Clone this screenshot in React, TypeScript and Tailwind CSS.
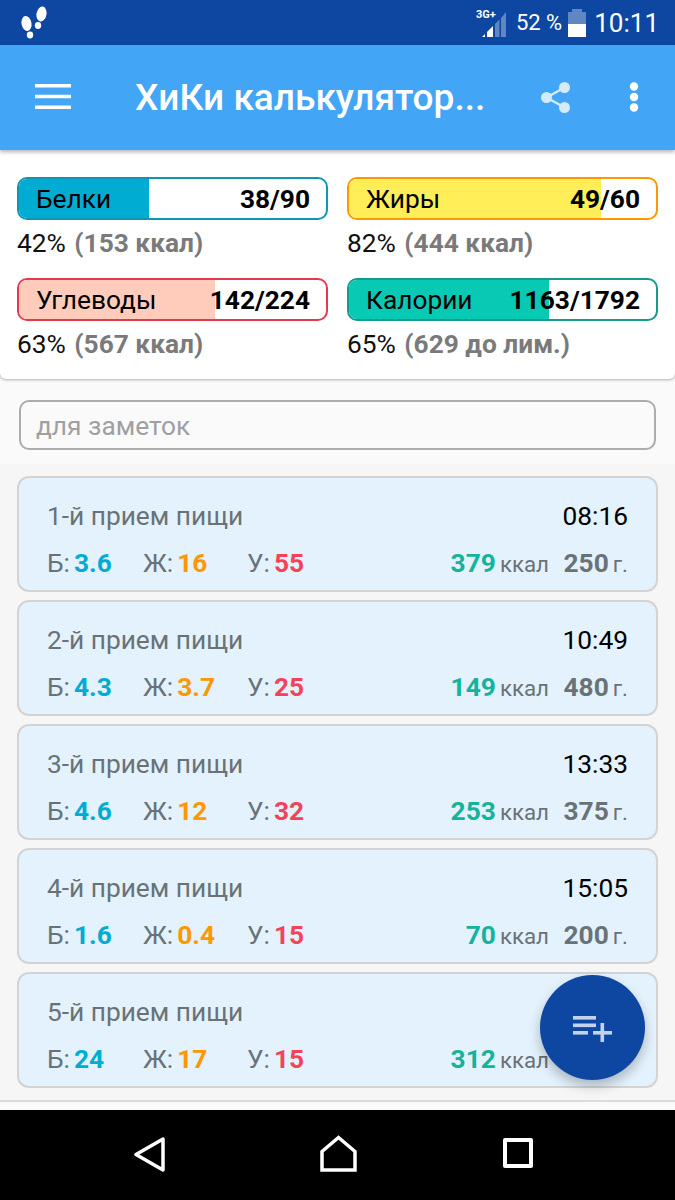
import React from "react";

type Bar = { name: string; value: string; pct: number; fill: string; border: string; p: string; note: string };
const bars: Bar[] = [
  { name: "Белки", value: "38/90", pct: 42.5, fill: "bg-[#00acd2]", border: "border-[#0f96b5]", p: "42%", note: "(153 ккал)" },
  { name: "Жиры", value: "49/60", pct: 82, fill: "bg-[#ffee58]", border: "border-[#ff9800]", p: "82%", note: "(444 ккал)" },
  { name: "Углеводы", value: "142/224", pct: 64, fill: "bg-[#ffccbc]", border: "border-[#e53950]", p: "63%", note: "(567 ккал)" },
  { name: "Калории", value: "1163/1792", pct: 65, fill: "bg-[#08c9b4]", border: "border-[#149b8c]", p: "65%", note: "(629 до лим.)" },
];

type Meal = { t: string; time: string; b: string; j: string; u: string; k: string; g: string };
const meals: Meal[] = [
  { t: "1-й прием пищи", time: "08:16", b: "3.6", j: "16", u: "55", k: "379", g: "250" },
  { t: "2-й прием пищи", time: "10:49", b: "4.3", j: "3.7", u: "25", k: "149", g: "480" },
  { t: "3-й прием пищи", time: "13:33", b: "4.6", j: "12", u: "32", k: "253", g: "375" },
  { t: "4-й прием пищи", time: "15:05", b: "1.6", j: "0.4", u: "15", k: "70", g: "200" },
  { t: "5-й прием пищи", time: "", b: "24", j: "17", u: "15", k: "312", g: "" },
];

function MealCard({ m }: { m: Meal }) {
  return (
    <div className="h-[116px] rounded-[12px] border-2 border-[#d3d3d3] bg-[#e3f2fd] pl-[28px] pr-[28px] pt-[20px]">
      <div className="flex h-[36px] items-center justify-between text-[26.3px] leading-[36px]">
        <span className="text-[#6a7277]">{m.t}</span>
        <span className="text-black">{m.time}</span>
      </div>
      <div className="mt-[11px] flex h-[36px] items-center text-[26.3px] leading-[36px] text-[#6a7277]">
        <div className="w-[96px]">
          Б:<b className="ml-[4px] font-bold text-[#00acd2]">{m.b}</b>
        </div>
        <div className="w-[104px]">
          Ж:<b className="ml-[4px] font-bold text-[#ff9800]">{m.j}</b>
        </div>
        <div className="w-[100px]">
          У:<b className="ml-[4px] font-bold text-[#f44359]">{m.u}</b>
        </div>
        <div className="ml-auto flex items-baseline">
          <b className="font-bold text-[#14b39d]">{m.k}</b>
          <span className="ml-[4px] text-[22.3px] text-[#6a7277]">ккал</span>
          <div className="flex w-[79px] items-baseline justify-end">
            {m.g && (
              <>
                <b className="font-bold text-[#6a7277]">{m.g}</b>
                <span className="ml-[4px] text-[22.3px] text-[#6a7277]">г.</span>
              </>
            )}
          </div>
        </div>
      </div>
    </div>
  );
}

export default function App() {
  return (
    <div className="relative flex h-[1200px] w-[675px] flex-col overflow-hidden bg-[#f5f5f5] font-['Roboto',sans-serif]">
      {/* status bar */}
      <div className="flex h-[45px] shrink-0 items-center bg-[#0d47a1] pl-[20px] pr-[16px] text-white">
        <svg width="28" height="34" viewBox="0 0 28 34" fill="white">
          <ellipse cx="6.5" cy="17.5" rx="5" ry="7.5" transform="rotate(-10 6.5 17.5)" />
          <ellipse cx="10" cy="29" rx="3.2" ry="3.4" />
          <ellipse cx="21.5" cy="8" rx="5" ry="7.5" transform="rotate(10 21.5 8)" />
          <ellipse cx="18" cy="19.5" rx="3.2" ry="3.4" />
        </svg>
        <div className="ml-auto flex items-center">
          <svg width="33" height="32" viewBox="-7 -2 33 32" className="mt-[4px]">
            <path d="M1 26 L4 23 V26 Z" fill="white" />
            <path d="M6 26 V21 L12 15 V26 Z" fill="white" />
            <path d="M14 26 V13 L18.5 8.5 V26 Z" fill="#5f87c2" />
            <path d="M20 26 V7 L25 1 V26 Z" fill="#5f87c2" />
            <text x="-5" y="7" fill="white" fontSize="11" fontWeight="700" fontFamily="Roboto">3G+</text>
          </svg>
          <span className="ml-[9px] text-[22px] leading-none">52 %</span>
          <div className="ml-[6px] flex h-[28px] w-[18px] flex-col items-center">
            <div className="h-[3px] w-[10px] bg-[#5f87c2]" />
            <div className="h-[12px] w-[18px] bg-[#5f87c2]" />
            <div className="h-[13px] w-[18px] bg-white" />
          </div>
          <span className="ml-[8px] text-[26px] leading-none">10:11</span>
        </div>
      </div>

      {/* app bar */}
      <div className="z-20 flex h-[105px] shrink-0 items-center bg-[#42a5f5] text-white shadow-[0_2px_4px_rgba(0,0,0,0.3)]">
        <svg width="36" height="25" viewBox="0 0 36 25" fill="white" className="ml-[35px] mb-[3px]">
          <rect x="0" y="0" width="36" height="3.5" />
          <rect x="0" y="10.75" width="36" height="3.5" />
          <rect x="0" y="21.5" width="36" height="3.5" />
        </svg>
        <span className="ml-[64px] w-[406px] whitespace-nowrap text-[37px] font-medium leading-none">ХиКи калькулятор...</span>
        <svg width="29" height="31" viewBox="0 0 29 31" fill="#d5ebfb" className="mb-[1px]">
          <circle cx="5.5" cy="15.5" r="5.5" />
          <circle cx="23.5" cy="5.5" r="5.5" />
          <circle cx="23.5" cy="25.5" r="5.5" />
          <path d="M5.5 15.5 L23.5 5.5 M5.5 15.5 L23.5 25.5" stroke="#d5ebfb" strokeWidth="2.5" />
        </svg>
        <svg width="10" height="30" viewBox="0 0 10 30" fill="white" className="ml-[59px] mb-[1px]">
          <circle cx="5" cy="4.5" r="4.2" />
          <circle cx="5" cy="15" r="4.2" />
          <circle cx="5" cy="25.5" r="4.2" />
        </svg>
      </div>

      {/* summary */}
      <div className="z-10 h-[229px] shrink-0 rounded-b-[6px] bg-white px-[17px] pt-[27px] shadow-[0_1px_3px_rgba(0,0,0,0.3)]">
        <div className="grid grid-cols-[311px_311px] gap-x-[19px] gap-y-[17px]">
          {bars.map((b) => (
            <div key={b.name}>
              <div className={`relative h-[43px] overflow-hidden rounded-[10px] border-2 bg-white ${b.border}`}>
                <div className={`absolute inset-y-0 left-0 ${b.fill}`} style={{ width: `${b.pct}%` }} />
                <div className="relative flex h-full items-center justify-between pl-[17px] pr-[16px] pt-[1px] text-[26.3px] leading-none text-black">
                  <span>{b.name}</span>
                  <b className="font-bold">{b.value}</b>
                </div>
              </div>
              <div className="mt-[5px] h-[36px] whitespace-nowrap text-[26.3px] leading-[36px] text-[#111]">
                {b.p} <b className="ml-[2px] font-bold text-[#7a7a7a]">{b.note}</b>
              </div>
            </div>
          ))}
        </div>
      </div>

      {/* notes */}
      <div className="h-[85px] shrink-0 bg-[#fafafa] pl-[19px] pr-[19px] pt-[21px]">
        <div className="flex h-[50px] items-center rounded-[10px] border-2 border-[#acacac] pl-[15px] pt-[3px] text-[26.3px] text-[#a0a0a0]">
          для заметок
        </div>
      </div>

      {/* list */}
      <div className="h-[638px] shrink-0 border-b-2 border-[#dcdcdc] bg-[#f6f6f6] px-[17px] pt-[12px]">
        <div className="flex flex-col gap-[8px]">
          {meals.map((m) => (
            <MealCard key={m.t} m={m} />
          ))}
        </div>
      </div>
      <div className="h-[8px] shrink-0 bg-[#fafafa]" />

      {/* nav */}
      <div className="flex flex-1 items-center bg-black pl-[134px]">
        <svg width="31" height="35" viewBox="0 0 31 35" fill="none" stroke="white" strokeWidth="3.5" strokeLinejoin="round" className="mt-[-2px]">
          <path d="M29 2 V33 L2 17.5 Z" />
        </svg>
        <svg width="37" height="37" viewBox="0 0 37 37" fill="none" stroke="white" strokeWidth="3.5" className="ml-[155px] mt-[-4px]">
          <path d="M18.5 2.5 L35 16.5 V35 H2 V16.5 Z" />
        </svg>
        <div className="ml-[146px] h-[30px] w-[30px] rounded-[2px] border-[4px] border-white mt-[-4px]" />
      </div>

      {/* fab */}
      <div className="absolute left-[540px] top-[975px] z-30 flex h-[105px] w-[105px] items-center justify-center rounded-full bg-[#0d47a1] shadow-[0_6px_12px_rgba(0,0,0,0.25)]">
        <svg width="39" height="26" viewBox="0 0 39 26" fill="#c5d3ea" className="mt-[3px]">
          <rect x="0" y="0" width="23" height="3.6" />
          <rect x="0" y="7.5" width="23" height="3.6" />
          <rect x="0" y="15" width="15" height="3.6" />
          <rect x="27.5" y="7" width="3.6" height="19" />
          <rect x="20" y="15" width="19" height="3.6" />
        </svg>
      </div>
    </div>
  );
}
